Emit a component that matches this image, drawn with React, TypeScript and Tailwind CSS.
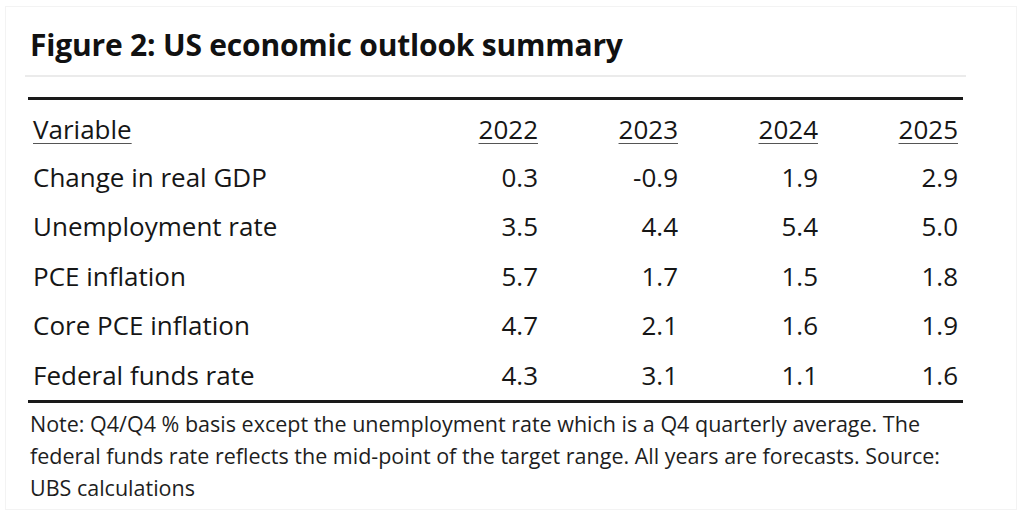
const rows: [string, string, string, string, string][] = [
  ['Change in real GDP', '0.3', '-0.9', '1.9', '2.9'],
  ['Unemployment rate', '3.5', '4.4', '5.4', '5.0'],
  ['PCE inflation', '5.7', '1.7', '1.5', '1.8'],
  ['Core PCE inflation', '4.7', '2.1', '1.6', '1.9'],
  ['Federal funds rate', '4.3', '3.1', '1.1', '1.6'],
];

const years = ['2022', '2023', '2024', '2025'];

export default function App() {
  return (
    <div className="w-[1024px] h-[523px] bg-white pl-[5px] pt-[6px] font-['Open_Sans',sans-serif] text-[#161616]">
      <div className="w-[1012px] h-[504px] border border-[#f3f3f3] pl-[10px] pt-[20px]">
        <h1 className="pl-[14px] text-[30px] leading-[36px] font-bold text-[#111] tracking-[-0.2px]">
          Figure 2: US economic outlook summary
        </h1>
        <div className="ml-[9px] mt-[12px] w-[941px] h-[2px] bg-[#ebebeb]" />
        <div className="ml-[12px] mt-[20px] w-[935px] border-t-[3px] border-[#1a1a1a]">
          <div className="grid grid-cols-[1fr_140px_140px_140px_140px] px-[5px] h-[52px] items-end pb-[7px] text-[26px] leading-[32px]">
            <span className="underline decoration-1 underline-offset-4 decoration-[#555]">Variable</span>
            {years.map((y) => (
              <span key={y} className="text-right">
                <span className="underline decoration-1 underline-offset-4 decoration-[#555]">{y}</span>
              </span>
            ))}
          </div>
          {rows.map((r) => (
            <div
              key={r[0]}
              className="grid grid-cols-[1fr_140px_140px_140px_140px] px-[5px] h-[49.5px] items-center text-[26px] leading-[32px]"
            >
              <span>{r[0]}</span>
              {r.slice(1).map((v, i) => (
                <span key={i} className="text-right">{v}</span>
              ))}
            </div>
          ))}
          <div className="h-[3px] bg-[#1a1a1a]" />
        </div>
        <p className="mt-[5px] pl-[14px] w-[995px] text-[21.5px] leading-[32px] text-[#1e1e1e] whitespace-nowrap">
          Note: Q4/Q4 % basis except the unemployment rate which is a Q4 quarterly average. The
          <br />
          federal funds rate reflects the mid-point of the target range. All years are forecasts. Source:
          <br />
          UBS calculations
        </p>
      </div>
    </div>
  );
}
